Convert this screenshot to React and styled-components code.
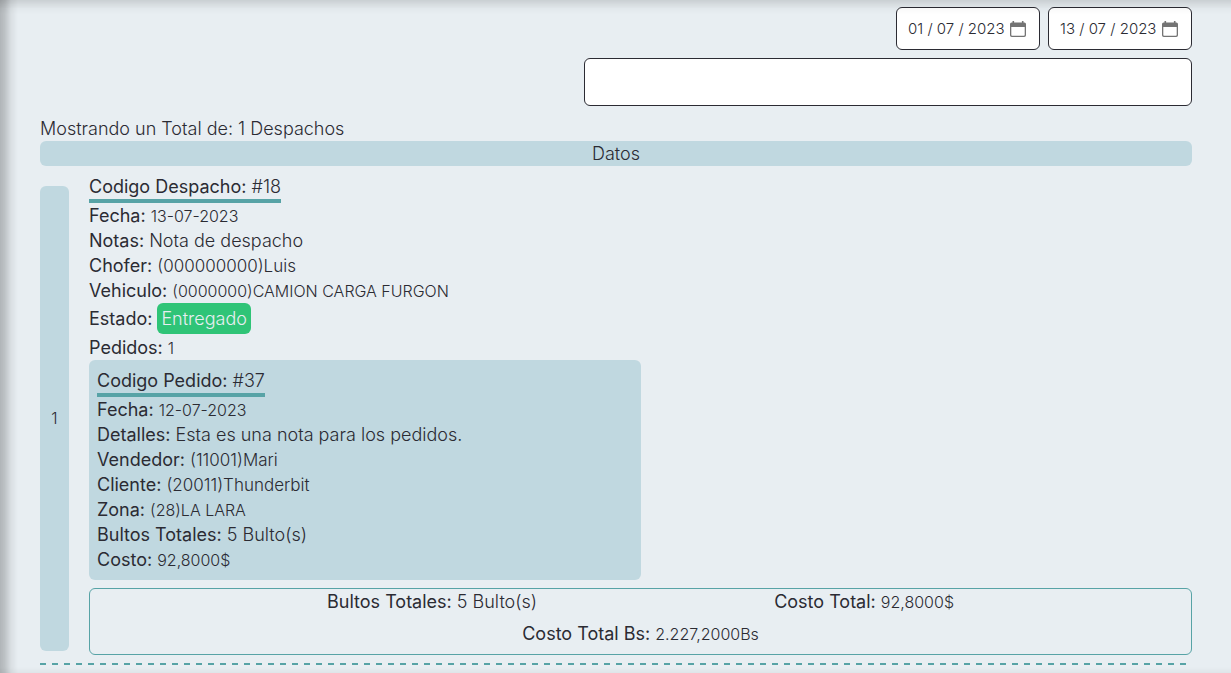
import React, { useState } from "react";
import styled, { createGlobalStyle } from "styled-components";

const c = {
  page: "#e8eef2",
  panel: "#c0d8e0",
  teal: "#57a3a6",
  ink: "#2b2b33",
  green: "#2fc477",
};

const GlobalStyle = createGlobalStyle`
  * { box-sizing: border-box; }
  body {
    margin: 0;
    background: ${c.page};
    color: ${c.ink};
    font-family: Inter, "Open Sans", sans-serif;
    font-size: 18px;
    font-weight: 300;
    line-height: 25px;
  }
`;

const Page = styled.main`
  min-height: 100vh;
  padding: 7px 39px 8px 40px;
`;

const EdgeShade = styled.div`
  position: fixed;
  inset: 0;
  pointer-events: none;
  background:
    linear-gradient(to right, rgba(0, 0, 0, 0.24), rgba(0, 0, 0, 0.18) 5px, rgba(0, 0, 0, 0.06) 11px, transparent 18px),
    linear-gradient(to bottom, rgba(0, 0, 0, 0.13), rgba(0, 0, 0, 0.08) 4px, rgba(0, 0, 0, 0.02) 9px, transparent 15px),
    linear-gradient(to top, rgba(0, 0, 0, 0.04), transparent 6px);
`;

const Filters = styled.form`
  display: flex;
  flex-direction: column;
  align-items: flex-end;
  gap: 8px;
  margin-bottom: 10px;
`;

const DateRow = styled.div`
  display: flex;
  gap: 8px;
`;

const DateField = styled.div`
  display: flex;
  align-items: center;
  width: 144px;
  height: 43px;
  padding: 0 13px 0 11px;
  background: #fff;
  border: 1px solid ${c.ink};
  border-radius: 6px;
`;

const DateInput = styled.input`
  flex: 1;
  min-width: 0;
  padding: 0;
  border: 0;
  outline: 0;
  background: none;
  color: inherit;
  font: inherit;
  font-size: 15px;
`;

const CalendarButton = styled.button`
  display: flex;
  flex: none;
  padding: 0;
  border: 0;
  background: none;
  color: #747474;
`;

const SearchInput = styled.input`
  width: 608px;
  max-width: 100%;
  height: 48px;
  padding: 8px 12px;
  background: #fff;
  border: 1px solid ${c.ink};
  border-radius: 6px;
  color: inherit;
  font: inherit;
`;

const Summary = styled.p`
  margin: 0;
`;

const ListHeader = styled.div`
  background: ${c.panel};
  border-radius: 6px;
  text-align: center;
`;

const DispatchRow = styled.article`
  display: flex;
  gap: 20px;
  padding: 8px 0 10px;
  background: repeating-linear-gradient(to right, ${c.teal} 0 6px, transparent 6px 12px) bottom / 100% 2px no-repeat;
`;

const RowIndex = styled.div`
  display: flex;
  flex: none;
  align-items: center;
  justify-content: center;
  width: 29px;
  margin: 12px 0 4px;
  background: ${c.panel};
  border-radius: 6px;
  font-size: 16px;
`;

const DispatchBody = styled.div`
  flex: 1;
  min-width: 0;
`;

const Title = styled.h2`
  width: fit-content;
  margin: 0;
  border-bottom: 4px solid ${c.teal};
  font-size: 18px;
  font-weight: 300;
`;

const Line = styled.p`
  margin: 0;
`;

const StatusLine = styled(Line)`
  display: flex;
  align-items: center;
  gap: 5px;
  padding-bottom: 1px;
`;

const Label = styled.span`
  font-weight: 400;
`;

const valueSizes = { number: "16px", code: "17px", prose: "18px" };

const Value = styled.span`
  font-size: ${(p) => valueSizes[p.$kind]};
  line-height: 1;
`;

const Badge = styled.span`
  padding: 3px 4px;
  background: ${c.green};
  border-radius: 6px;
  color: ${c.page};
`;

const OrderCard = styled.section`
  width: 50%;
  padding: 8px;
  background: ${c.panel};
  border-radius: 6px;
`;

const Totals = styled.footer`
  display: grid;
  gap: 7px;
  margin-top: 8px;
  padding-bottom: 8px;
  border: 1px solid ${c.teal};
  border-radius: 6px;
`;

const TotalsRow = styled.div`
  display: flex;
  justify-content: space-evenly;
`;

function CalendarIcon() {
  return (
    <svg width="16" height="16" viewBox="0 0 16 16" aria-hidden="true">
      <path
        fill="currentColor"
        fillRule="evenodd"
        d="M2.5 0h1.6v1.4h7.8V0h1.6v1.4h.9q1.6 0 1.6 1.6v11.2q0 1.8-1.8 1.8H1.8Q0 16 0 14.200V3q0-1.600 1.600-1.600h.9zM1.300 6v7.900q0 .8.8.8h11.800q.8 0 .8-.8V6z"
      />
    </svg>
  );
}

function DatePicker({ label, initial }) {
  const [value, setValue] = useState(initial);
  return (
    <DateField>
      <DateInput aria-label={label} value={value} onChange={(e) => setValue(e.target.value)} />
      <CalendarButton type="button" aria-label={`Abrir calendario: ${label}`}>
        <CalendarIcon />
      </CalendarButton>
    </DateField>
  );
}

function Field({ label, kind = "code", children }) {
  return (
    <Line>
      <Label>{label}:</Label> <Value $kind={kind}>{children}</Value>
    </Line>
  );
}

const order = [
  ["Fecha", "12-07-2023", "number"],
  ["Detalles", "Esta es una nota para los pedidos.", "prose"],
  ["Vendedor", "(11001)Mari", "code"],
  ["Cliente", "(20011)Thunderbit", "code"],
  ["Zona", "(28)LA LARA", "number"],
  ["Bultos Totales", "5 Bulto(s)", "prose"],
  ["Costo", "92,8000$", "number"],
];

const dispatch = [
  ["Fecha", "13-07-2023", "number"],
  ["Notas", "Nota de despacho", "prose"],
  ["Chofer", "(000000000)Luis", "code"],
  ["Vehiculo", "(0000000)CAMION CARGA FURGON", "number"],
];

export default function App() {
  return (
    <>
      <GlobalStyle />
      <Page>
        <Filters onSubmit={(e) => e.preventDefault()}>
          <DateRow>
            <DatePicker label="Desde" initial="01 / 07 / 2023" />
            <DatePicker label="Hasta" initial="13 / 07 / 2023" />
          </DateRow>
          <SearchInput type="search" aria-label="Buscar" />
        </Filters>
        <Summary>Mostrando un Total de: 1 Despachos</Summary>
        <ListHeader>Datos</ListHeader>
        <DispatchRow>
          <RowIndex>1</RowIndex>
          <DispatchBody>
            <Title>
              <Label>Codigo Despacho:</Label> <Value $kind="prose">#18</Value>
            </Title>
            {dispatch.map(([label, value, kind]) => (
              <Field key={label} label={label} kind={kind}>{value}</Field>
            ))}
            <StatusLine>
              <Label>Estado:</Label>
              <Badge>Entregado</Badge>
            </StatusLine>
            <Field label="Pedidos" kind="number">1</Field>
            <OrderCard>
              <Title>
                <Label>Codigo Pedido:</Label> <Value $kind="prose">#37</Value>
              </Title>
              {order.map(([label, value, kind]) => (
                <Field key={label} label={label} kind={kind}>{value}</Field>
              ))}
            </OrderCard>
            <Totals>
              <TotalsRow>
                <Field label="Bultos Totales" kind="prose">5 Bulto(s)</Field>
                <Field label="Costo Total" kind="number">92,8000$</Field>
              </TotalsRow>
              <TotalsRow>
                <Field label="Costo Total Bs" kind="number">2.227,2000Bs</Field>
              </TotalsRow>
            </Totals>
          </DispatchBody>
        </DispatchRow>
      </Page>
      <EdgeShade />
    </>
  );
}
